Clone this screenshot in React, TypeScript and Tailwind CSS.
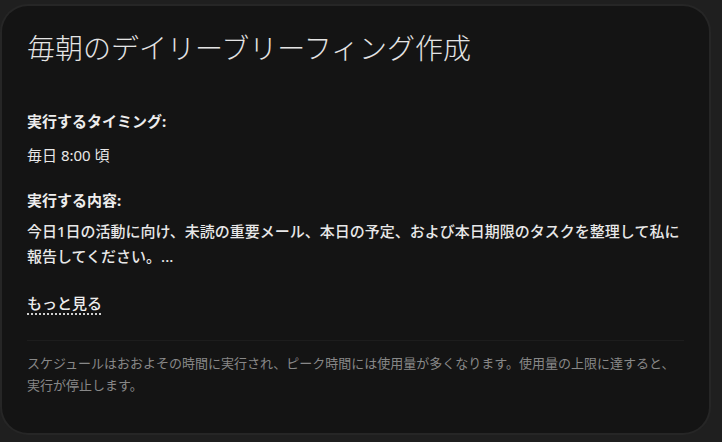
import React from "react";

export default function App() {
  return (
    <div className="w-[722px] h-[442px] bg-[#1f1f1f] overflow-hidden">
      <div
        className="ml-[2px] mt-[6px] w-[707px] h-[427px] rounded-[26px] bg-[#141414] shadow-[0_0_0_2px_#262626] pt-[24px] pl-[25px] pr-[25px] text-[#e8e8e8]"
        style={{ fontFamily: '"Noto Sans", "Noto Sans CJK JP", sans-serif' }}
      >
        <h1 className="text-[28px] leading-[36px] font-light text-[#e4e4e4]">
          毎朝のデイリーブリーフィング作成
        </h1>
        <div className="mt-[43px] text-[15px] leading-[24px] font-bold text-[#ededed]">
          実行するタイミング:
        </div>
        <div className="mt-[10px] text-[15px] leading-[24px] text-[#e8e8e8]">毎日 8:00 頃</div>
        <div className="mt-[21px] text-[15px] leading-[24px] font-bold text-[#ededed]">
          実行する内容:
        </div>
        <p className="mt-[7px] text-[15px] leading-[25px] font-medium text-[#e8e8e8]">
          今日1日の活動に向け、未読の重要メール、本日の予定、および本日期限のタスクを整理して私に報告してください。...
        </p>
        <div className="mt-[22px] text-[15px] leading-[24px]">
          <span className="font-medium text-[#ededed] underline decoration-dotted decoration-2 underline-offset-[4px] decoration-[#d0d0d0]">
            もっと見る
          </span>
        </div>
        <div className="mt-[25px] h-px w-[657px] bg-[#1d1d1d]" />
        <p className="mt-[11px] text-[13px] leading-[22px] text-[#888888]">
          スケジュールはおおよその時間に実行され、ピーク時間には使用量が多くなります。使用量の上限に達すると、実行が停止します。
        </p>
      </div>
    </div>
  );
}
